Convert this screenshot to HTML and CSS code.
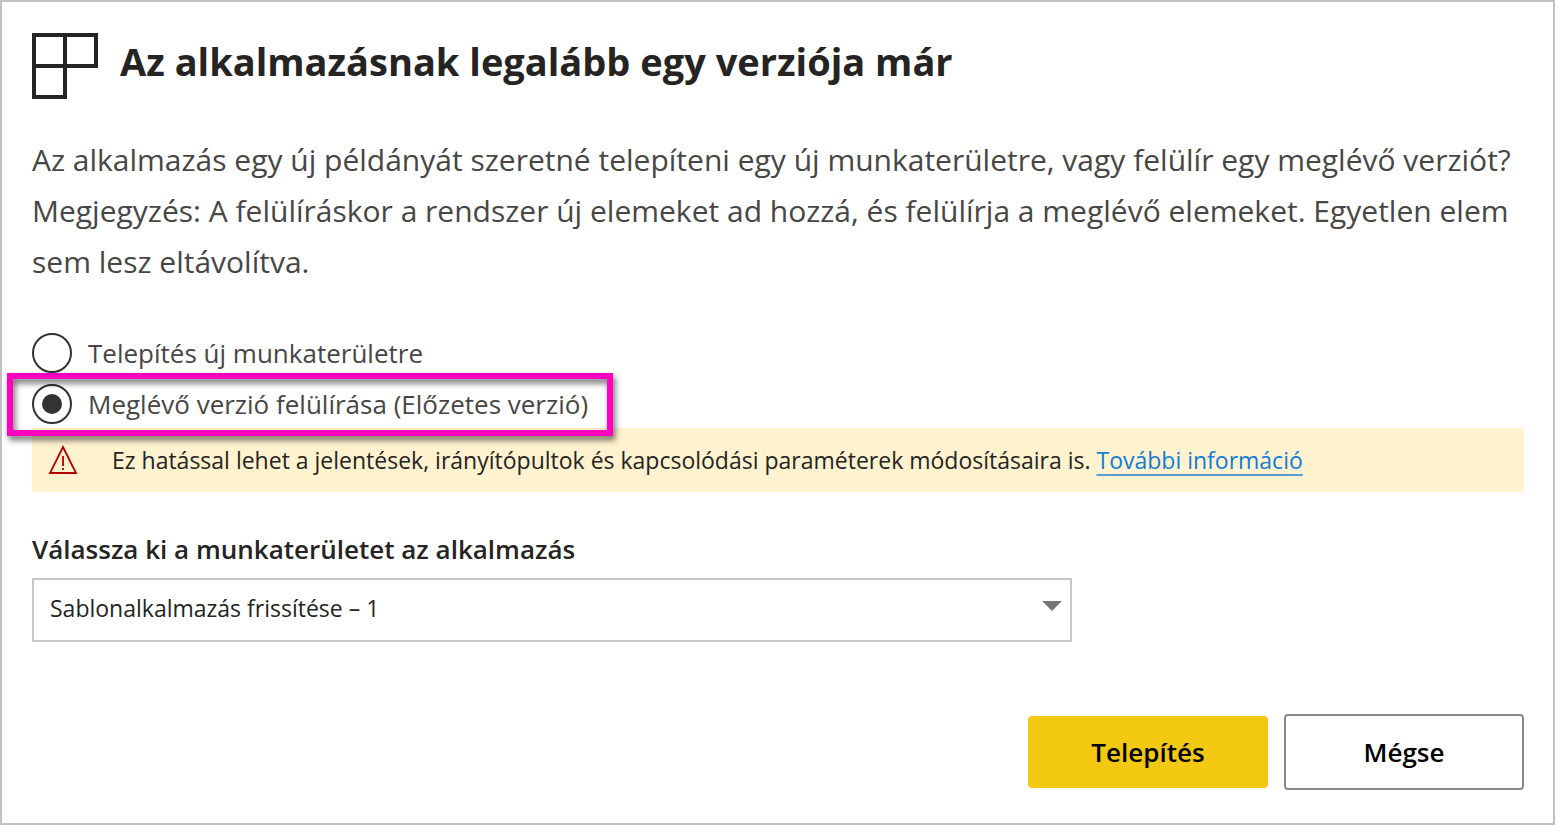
FILE: index.html
```html
<!DOCTYPE html>
<html lang="hu">
<head>
<meta charset="utf-8">
<meta name="viewport" content="width=device-width, initial-scale=1">
<title>Alkalmazás telepítése</title>
<link rel="stylesheet" href="styles.css">
</head>
<body>
<form class="dialog">
  <header class="dialog-header">
    <svg class="app-icon" width="66" height="66" viewBox="0 0 66 66" fill="none" stroke="#252423" stroke-width="4" aria-hidden="true">
      <path d="M2 2H64V33H2ZM33 2V64H2V2"/>
    </svg>
    <h1 class="dialog-title">Az alkalmazásnak legalább egy verziója már</h1>
  </header>

  <p class="description">Az alkalmazás egy új példányát szeretné telepíteni egy új munkaterületre, vagy felülír egy meglévő verziót? Megjegyzés: A felülíráskor a rendszer új elemeket ad hozzá, és felülírja a meglévő elemeket. Egyetlen elem sem lesz eltávolítva.</p>

  <div class="options">
    <label class="option"><input class="radio" type="radio" name="mode" value="new"><span>Telepítés új munkaterületre</span></label>
    <label class="option option-highlighted"><input class="radio" type="radio" name="mode" value="overwrite" checked><span>Meglévő verzió felülírása (Előzetes verzió)</span></label>
  </div>

  <div class="warning">
    <svg class="warning-icon" width="30" height="30" viewBox="0 0 30 30" fill="none" stroke="#b30000" aria-hidden="true">
      <path stroke-width="1.8" d="M15 2 28 28H2Z"/>
      <path stroke-width="1.8" d="M15 11V21M15 23V25"/>
    </svg>
    <p class="warning-text">Ez hatással lehet a jelentések, irányítópultok és kapcsolódási paraméterek módosításaira is. <a class="link" href="#">További információ</a></p>
  </div>

  <div class="field">
    <label class="field-label" for="workspace">Válassza ki a munkaterületet az alkalmazás</label>
    <div class="select-wrap">
      <select class="select" id="workspace"><option>Sablonalkalmazás frissítése – 1</option></select>
      <svg class="select-arrow" width="20" height="10" viewBox="0 0 20 10" aria-hidden="true"><path d="M0 0H20L10 10Z" fill="#777"/></svg>
    </div>
  </div>

  <footer class="actions">
    <button class="button button-primary" type="button">Telepítés</button>
    <button class="button button-secondary" type="button">Mégse</button>
  </footer>
</form>
</body>
</html>
```

FILE: styles.css
```css
* {
  box-sizing: border-box;
}

body {
  margin: 0;
  background: #fff;
  color: #252423;
  font-family: "Open Sans", "Noto Sans", sans-serif;
}

.dialog {
  display: flex;
  flex-direction: column;
  min-height: 100vh;
  padding: 31px 29px 33px 30px;
  border: 2px solid #c0c0c0;
}

.dialog-header {
  display: flex;
  align-items: center;
  gap: 22px;
}

.app-icon,
.warning-icon {
  flex: none;
}

.dialog-title {
  margin: 0 0 10px;
  font-size: 38px;
  font-weight: 700;
  line-height: 52px;
}

.description {
  margin: 35px 0 0;
  color: #484644;
  font-size: 30px;
  line-height: 51px;
}

.options {
  display: flex;
  flex-direction: column;
  align-items: flex-start;
  gap: 11px;
  margin-top: 46px;
}

.option {
  position: relative;
  display: flex;
  align-items: center;
  gap: 16px;
  color: #484644;
  font-size: 26px;
  line-height: 40px;
}

.option-highlighted::after {
  content: "";
  position: absolute;
  inset: -11px -25px -12px -25px;
  border: 6px solid #ff00c0;
  filter: drop-shadow(2px 4px 3px rgba(0, 0, 0, 0.6));
  pointer-events: none;
}

.radio {
  display: grid;
  place-items: center;
  width: 40px;
  height: 40px;
  margin: 0;
  border: 2px solid #333;
  border-radius: 50%;
  background: #fff;
  appearance: none;
}

.radio:checked::before {
  content: "";
  width: 20px;
  height: 20px;
  border-radius: 50%;
  background: #333;
}

.warning {
  display: flex;
  align-items: center;
  gap: 34px;
  min-height: 64px;
  margin-top: 4px;
  padding: 0 16px;
  background: #fff2cf;
}

.warning-text {
  margin: 0;
  font-size: 23px;
  line-height: 32px;
}

.link {
  color: #117dd6;
  text-decoration: underline 2px #5b9bd5;
  text-decoration-skip-ink: none;
  text-underline-offset: 5px;
}

.field {
  display: flex;
  flex-direction: column;
  gap: 9px;
  margin-top: 37px;
}

.field-label {
  font-size: 26px;
  font-weight: 600;
  line-height: 40px;
}

.select-wrap {
  position: relative;
  max-width: 1040px;
}

.select {
  display: block;
  width: 100%;
  height: 64px;
  padding: 0 48px 4px 16px;
  border: 2px solid #c8c8c8;
  border-radius: 0;
  background: #fff;
  color: #252423;
  font: inherit;
  font-size: 23px;
  appearance: none;
}

.select-arrow {
  position: absolute;
  top: 23px;
  right: 10px;
  pointer-events: none;
}

.actions {
  display: flex;
  align-items: center;
  justify-content: flex-end;
  gap: 16px;
  margin-top: auto;
}

.button {
  width: 240px;
  border-radius: 4px;
  color: #000;
  font: inherit;
  font-size: 26px;
  font-weight: 600;
}

.button-primary {
  height: 72px;
  border: 0;
  background: #f2c811;
}

.button-secondary {
  height: 76px;
  border: 2px solid #8a8886;
  background: #fff;
}
```
